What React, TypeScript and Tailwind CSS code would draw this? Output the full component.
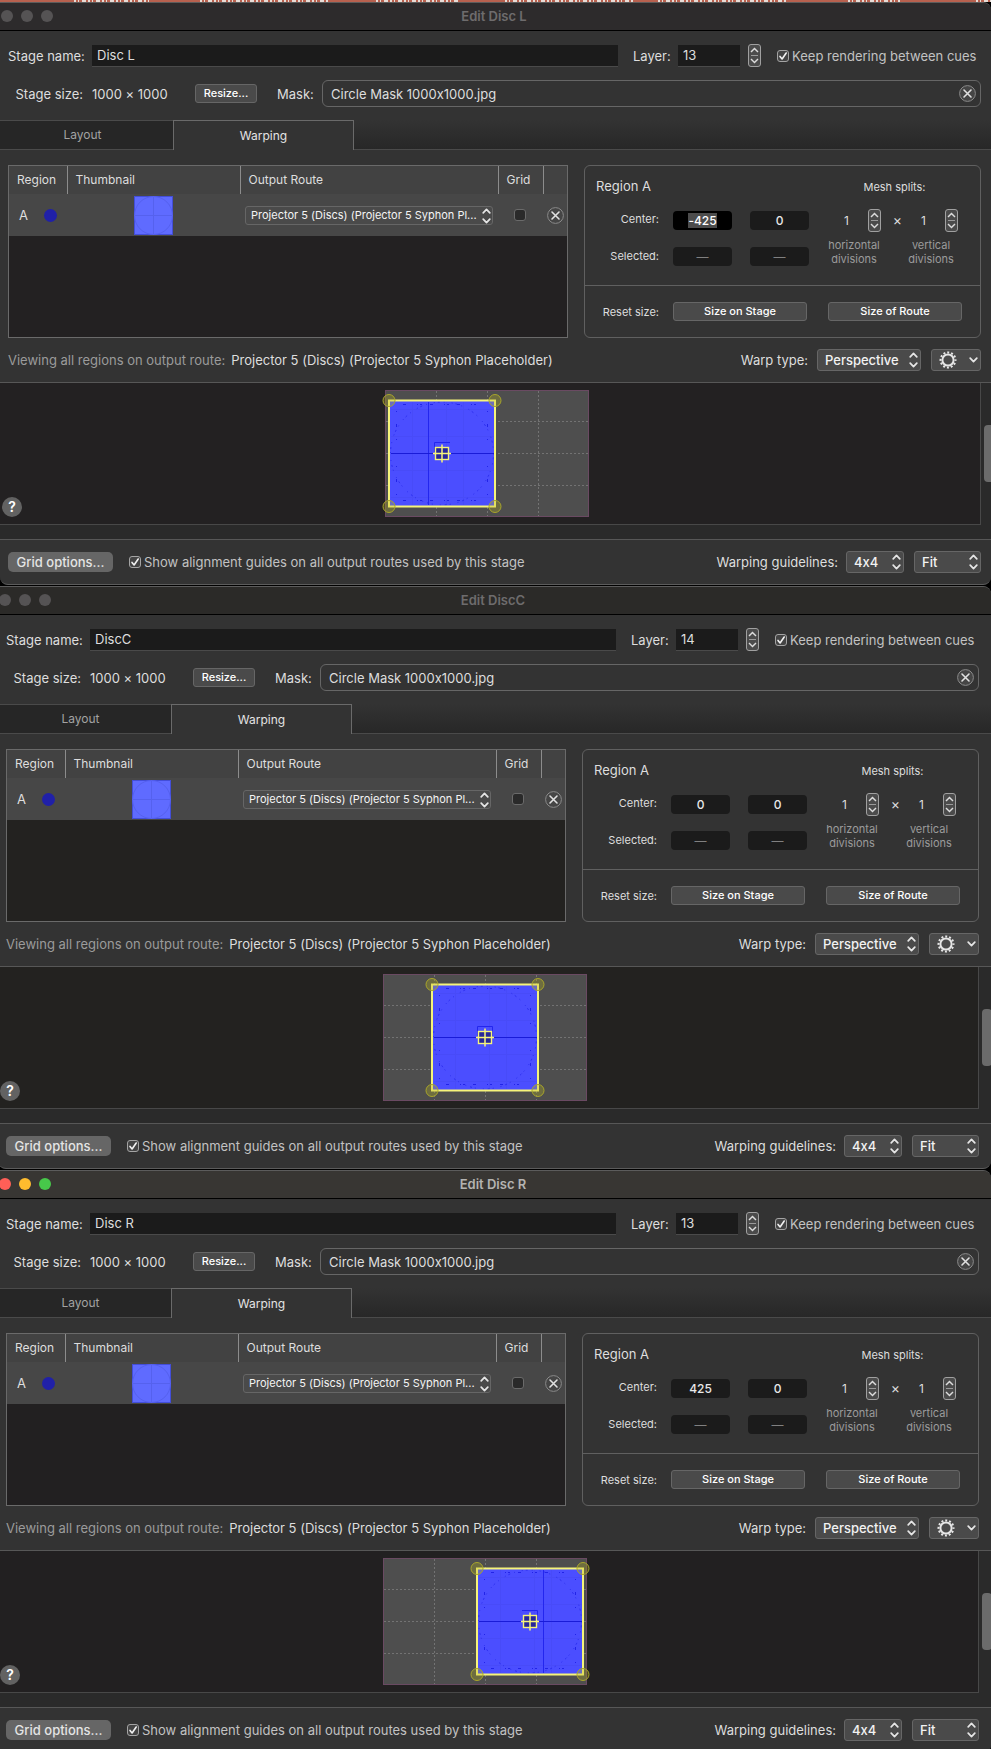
import { useState } from 'react';

type StageWindow = {
    name: string;
    title: string;
    layer: string;
    center: string;
    regionX: number;
    originX: number;
    active?: boolean;
    shifted?: boolean;
    selected?: boolean;
    titleBg: string;
    canvasBg: string;
};

const WINDOWS: StageWindow[] = [
    { name: 'Disc L', title: 'Edit Disc L', layer: '13', center: '-425', regionX: 4, originX: 43, selected: true, titleBg: 'bg-[#2d2b2c]', canvasBg: 'bg-[#232122]' },
    { name: 'DiscC', title: 'Edit DiscC', layer: '14', center: '0', regionX: 49, originX: 102, shifted: true, titleBg: 'bg-[#2b2a28]', canvasBg: 'bg-[#232220]' },
    { name: 'Disc R', title: 'Edit Disc R', layer: '13', center: '425', regionX: 94, originX: 160, active: true, shifted: true, titleBg: 'bg-[#383633]', canvasBg: 'bg-[#222021]' },
];

// light ticks = bottoms of the glyphs in the window behind
const BEHIND = [[74, 76], [200, 130], [376, 84], [505, 128], [658, 128], [848, 52], [976, 15]];

function UpDown({ className }: { className?: string }) {
    return (
        <svg width="9" height="16" viewBox="0 0 9 16" fill="none" stroke="#e6e6e6" strokeWidth="1.7" strokeLinecap="round" strokeLinejoin="round" className={className}>
            <path d="M1.2 4.8 4.5 1.4 7.8 4.8M1.2 11.2 4.5 14.6 7.8 11.2" />
        </svg>
    );
}

function Stepper({ label }: { label: string }) {
    return (
        <div className="flex h-[23px] w-[13px] flex-col items-center rounded-[3px] border border-[#a0a0a0] bg-[#4b4b4b]">
            <button aria-label={`Increase ${label}`} className="flex h-[10px] items-center">
                <svg width="9" height="6" viewBox="0 0 9 6" fill="none" stroke="#dcdcdc" strokeWidth="1.4"><path d="M1 5 4.5 1.4 8 5" /></svg>
            </button>
            <div className="h-px w-[7px] bg-[#9a9a9a]"></div>
            <button aria-label={`Decrease ${label}`} className="flex h-[10px] items-center">
                <svg width="9" height="6" viewBox="0 0 9 6" fill="none" stroke="#dcdcdc" strokeWidth="1.4"><path d="M1 1 4.5 4.6 8 1" /></svg>
            </button>
        </div>
    );
}

function Check({ id, defaultChecked, label }: { id: string, defaultChecked?: boolean, label?: string }) {
    return (
        <span className="relative block h-3 w-3">
            <input id={id} type="checkbox" defaultChecked={defaultChecked} aria-label={label} className="peer block h-3 w-3 appearance-none rounded-[3px] border border-[#6a6a6a] bg-[#2a2a2a] checked:border-[#a4a4a4] checked:bg-[#444]" />
            <svg width="12" height="12" viewBox="0 0 12 12" fill="none" stroke="#f0f0f0" strokeWidth="1.6" strokeLinecap="round" strokeLinejoin="round" className="pointer-events-none absolute inset-0 hidden peer-checked:block">
                <path d="M3 6.4 5.1 9 9.2 3" />
            </svg>
        </span>
    );
}

function ClearButton({ label }: { label: string }) {
    return (
        <button aria-label={label} className="block h-[17px] w-[17px] shrink-0">
            <svg width="17" height="17" viewBox="0 0 17 17" fill="none">
                <circle cx="8.5" cy="8.5" r="7.9" fill="#454545" stroke="#8a8a8a" />
                <path d="M5 5 12 12M12 5 5 12" stroke="#e0e0e0" strokeWidth="1.6" strokeLinecap="round" />
            </svg>
        </button>
    );
}

function Select({ id, value, label, className, small }: { id?: string, value: string, label?: string, className: string, small?: boolean }) {
    return (
        <div className={`relative ${className}`}>
            <select id={id} aria-label={label} className={small
                ? 'block h-[19px] w-full appearance-none rounded-[3px] border border-[#666] bg-[#4a4a4a] pr-3 pl-[5px] text-[11px] leading-[17px] text-[#f4f4f4]'
                : 'block h-[22px] w-full appearance-none rounded-[3px] border border-[#666] bg-[#4a4a4a] pr-5 pl-[7px] text-[13px] leading-5 font-medium text-[#f2f2f2]'}>
                <option>{value}</option>
            </select>
            <UpDown className={small ? 'pointer-events-none absolute top-[2px] right-[2px]' : 'pointer-events-none absolute top-[3px] right-[3px]'} />
        </div>
    );
}

function Thumbnail() {
    return (
        <svg width="39" height="39" viewBox="0 0 39 39" className="mx-auto block">
            <rect width="39" height="39" fill="#5f6bff" />
            <path d="M0 .5H39M0 38.5H39M.5 0V39M38.5 0V39" stroke="#434ed8" />
            <circle cx="19.5" cy="19.5" r="19" fill="none" stroke="#5561ee" />
            <path d="M19.5 0V39M0 19.5H39" stroke="#5561ee" />
        </svg>
    );
}

function StageCanvas({ x, originX }: { x: number, originX: number }) {
    const cx = x + 53;
    return (
        <svg width="216" height="127" viewBox="-6 0 216 127" fill="none" className="block">
            <rect width="204" height="127" fill="#4e4e4e" />
            <rect x=".5" y=".5" width="203" height="126" stroke="#6a4a62" />
            <path d="M51.5 1V126M102.5 1V126M153.5 1V126" stroke="#737373" strokeDasharray="2 2" />
            <path d="M1 31.5H203M1 63.5H203M1 95.5H203" stroke="#737373" strokeDasharray="2 2" />
            <rect x={x} y="10" width="107" height="107" fill="#4b4eff" />
            <path d={`M${x + 23.5} 12V115M${x + 57.5} 12V115M${x + 74.5} 12V115M${x + 2} 19.5H${x + 105}M${x + 2} 46.5H${x + 105}M${x + 2} 80.5H${x + 105}M${x + 2} 107.5H${x + 105}`} stroke="#484bf8" />
            <circle cx={cx} cy="63.5" r="51.5" stroke="#2a2cf0" strokeDasharray="1 3 2 4 1 7" />
            <path d={`M${x + 14} 14.5H${x + 94}M${x + 14} 110.5H${x + 94}`} stroke="#2224e8" strokeDasharray="3 11 1 2 2 8" />
            <path d={`M${x + 7.5} 21V50M${x + 7.5} 76V108M${x + 98.5} 21V50M${x + 98.5} 76V108`} stroke="#2224e8" strokeDasharray="1 12 3 12" />
            {originX !== 102 && <path d={`M${originX + 0.5} 12V115`} stroke="#2326ee" />}
            <path d={`M${x + 2} 63.5H${x + 105}`} stroke="#191bd8" />
            <path d={originX < 102 ? `M${cx - 7.5} 62V52.5H${cx + 8}` : originX > 102 ? `M${cx - 8} 52.5H${cx + 7.5}V62` : `M${cx - 7.5} 62V52.5H${cx + 7.5}V62`} stroke="#2326ee" />
            <rect x={x} y="10.5" width="106" height="106" stroke="#f6f47a" strokeWidth="2" />
            <rect x={cx - 6.5} y="57.5" width="13" height="12" fill="#26269a" stroke="#f6f47a" strokeWidth="1.4" />
            <path d={`M${cx} 54.5V72.5M${cx - 9} 63.5H${cx + 9}`} stroke="#f6f47a" strokeWidth="1.5" />
            {[[x, 10.5], [x + 106, 10.5], [x, 116.5], [x + 106, 116.5]].map(([px, py]) => (
                <circle key={`${px}-${py}`} cx={px} cy={py} r="6" fill="#b9b51e" fillOpacity=".3" stroke="#a9a62a" />
            ))}
        </svg>
    );
}

function Gear() {
    return (
        <svg width="18" height="18" viewBox="0 0 18 18" fill="none" stroke="#e6e6e6">
            <circle cx="9" cy="9" r="5.6" strokeWidth="2" />
            <circle cx="9" cy="9" r="7.5" strokeWidth="2" strokeDasharray="2 1.927" strokeDashoffset="1" />
        </svg>
    );
}

function EditStage({ win }: { win: StageWindow }) {
    const [tab, setTab] = useState('Warping');
    const id = win.name.replace(' ', '');
    const edge = win.shifted ? 'pl-2 pr-3' : 'pl-2 pr-2.5';
    const lights = win.active ? ['bg-[#ff5f57]', 'bg-[#febc2e]', 'bg-[#47c84a]'] : ['bg-[#555354]', 'bg-[#555354]', 'bg-[#555354]'];
    const field = 'block h-[19px] w-[59px] rounded-[4px] text-center text-[12px] font-medium outline-none focus:bg-black selection:bg-[#4c4c4c] selection:text-white';

    return (
        <section className={`border-b border-black ${win.shifted ? '-ml-0.5' : ''}`}>
            <div className="overflow-hidden rounded-tr-lg rounded-b-lg border-y border-[#5c5c5c] bg-[#333]">
                <header className={`grid h-7 grid-cols-[1fr_auto_1fr] items-center border-b border-black pr-[3px] pb-0.5 ${win.titleBg}`}>
                    <div className="flex gap-2 pl-px">
                        {lights.map((c, i) => <span key={i} className={`h-3 w-3 rounded-full ${c}`}></span>)}
                    </div>
                    <h2 className={`text-[13px] leading-4 font-semibold ${win.active ? 'text-[#b4b3b1]' : 'text-[#6e6c6d]'}`}>{win.title}</h2>
                </header>

                <div className={`flex items-center pt-[13px] ${edge}`}>
                    <label htmlFor={`${id}-name`} className="w-[75px] text-right whitespace-nowrap">Stage name:</label>
                    <input id={`${id}-name`} defaultValue={win.name} className="ml-[9px] h-[22px] min-w-0 flex-1 border-b border-[#4a4a4a] bg-[#1b1b1b] px-[5px]" />
                    <label htmlFor={`${id}-layer`} className="ml-[15px] w-9 whitespace-nowrap">Layer:</label>
                    <input id={`${id}-layer`} defaultValue={win.layer} className="ml-[9px] h-[22px] w-[62px] border-b border-[#4a4a4a] bg-[#1b1b1b] px-[5px]" />
                    <div className="ml-2"><Stepper label="layer" /></div>
                    <div className="ml-4 flex w-[204px] items-center gap-[3px]">
                        <Check id={`${id}-keep`} defaultChecked />
                        <label htmlFor={`${id}-keep`} className="whitespace-nowrap text-[#c2c2c2]">Keep rendering between cues</label>
                    </div>
                </div>

                <div className={`flex items-center pt-[13px] ${edge}`}>
                    <span className="w-[75px] text-right whitespace-nowrap">Stage size:</span>
                    <span className="ml-[9px] w-[103px] whitespace-nowrap">1000 × 1000</span>
                    <button className="h-[19px] w-[62px] rounded-[3px] border border-[#666] bg-[#4a4a4a] text-[11px] leading-[17px] font-medium text-white">Resize...</button>
                    <label htmlFor={`${id}-mask`} className="ml-5 w-[36px] whitespace-nowrap">Mask:</label>
                    <div className="ml-[9px] flex h-[27px] flex-1 items-center rounded-md border border-[#666] pr-1 pl-2">
                        <input id={`${id}-mask`} defaultValue="Circle Mask 1000x1000.jpg" className="min-w-0 flex-1" />
                        <ClearButton label="Clear mask" />
                    </div>
                </div>

                <div role="tablist" className="mt-[13px] flex h-[30px] bg-linear-to-b from-[#333] to-[#272727] text-[12px]">
                    {['Layout', 'Warping'].map((t) => (
                        <button key={t} role="tab" aria-selected={tab === t} onClick={() => setTab(t)} className={tab === t
                            ? 'w-[181px] border border-b-0 border-[#6a6a6a] bg-[#333] text-[#e4e4e4]'
                            : 'w-[173px] border-y border-[#4a4a4a] bg-[#262626] pr-2 text-[#a2a2a2]'}>{t}</button>
                    ))}
                    <div className="flex-1 border-b border-[#4a4a4a]"></div>
                </div>

                <div className={`grid grid-cols-[560fr_397fr] gap-4 pt-[15px] ${edge}`}>
                    <div className={`h-[173px] border border-[#6a6a6a] ${win.canvasBg}`}>
                        <table className="w-full table-fixed border-collapse text-left text-[12px]">
                            <thead className="bg-[#424242]">
                                <tr className="h-7">
                                    <th className="w-[58px] border-r border-[#8c8c8c] pl-2 font-normal">Region</th>
                                    <th className="w-[173px] border-r border-[#8c8c8c] pl-2 font-normal">Thumbnail</th>
                                    <th className="border-r border-[#8c8c8c] pl-2 font-normal">Output Route</th>
                                    <th className="w-[45px] border-r border-[#8c8c8c] pl-2 font-normal">Grid</th>
                                    <th className="w-6" aria-label="Remove"></th>
                                </tr>
                            </thead>
                            <tbody className="bg-[#474747]">
                                <tr className="h-[42px]">
                                    <td>
                                        <div className="flex items-center justify-between pr-2.5 pl-2.5 text-[13px]">A<span className="h-[13px] w-[13px] rounded-full bg-[#2020a8]"></span></div>
                                    </td>
                                    <td><Thumbnail /></td>
                                    <td className="px-[5px]"><Select value="Projector 5 (Discs) (Projector 5 Syphon Pl..." label="Output route" className="w-full" small /></td>
                                    <td className="pl-4"><Check id={`${id}-grid`} label="Grid" /></td>
                                    <td className="pl-1"><ClearButton label="Remove region" /></td>
                                </tr>
                            </tbody>
                        </table>
                    </div>

                    <div className="flex h-[173px] flex-col rounded-md border border-[#606060] text-[11px]">
                        <div className="grid flex-1 grid-cols-[74px_77px_77px_1fr] content-start border-b border-[#606060] pt-2">
                            <h3 className="col-span-3 pl-[11px] text-[13px] leading-6">Region A</h3>
                            <span className="pt-1 pr-1 text-center leading-[18px]">Mesh splits:</span>
                            <label htmlFor={`${id}-cx`} className="pt-[13px] text-right leading-[17px]">Center:</label>
                            <div className="pt-[13px] pl-[14px]">
                                <input id={`${id}-cx`} defaultValue={win.center} autoFocus={win.selected} onFocus={(e) => e.target.select()} className={`${field} bg-[#1b1b1b] text-[#e8e8e8]`} />
                            </div>
                            <div className="pt-[13px] pl-[14px]">
                                <input aria-label="Center y" defaultValue="0" className={`${field} bg-[#1b1b1b] text-[#e8e8e8]`} />
                            </div>
                            <div className="row-span-2 flex pt-[11px] pl-[14px] text-center">
                                <div className="flex w-[54px] flex-col">
                                    <div className="flex items-center justify-end gap-[19px] text-[12px]"><span>1</span><Stepper label="horizontal divisions" /></div>
                                    <p className="pt-1.5 leading-[14px] text-[#9b9b9b]">horizontal divisions</p>
                                </div>
                                <span className="w-[23px] pl-2.5 text-[14px] leading-[21px]">×</span>
                                <div className="flex w-[54px] flex-col">
                                    <div className="flex items-center justify-end gap-[19px] text-[12px]"><span>1</span><Stepper label="vertical divisions" /></div>
                                    <p className="pt-1.5 leading-[14px] text-[#9b9b9b]">vertical divisions</p>
                                </div>
                            </div>
                            <label htmlFor={`${id}-sx`} className="pt-[17px] text-right leading-[19px]">Selected:</label>
                            <div className="pt-[17px] pl-[14px]"><input id={`${id}-sx`} defaultValue="—" className={`${field} bg-[#1b1b1b] text-[#808080]`} /></div>
                            <div className="pt-[17px] pl-[14px]"><input aria-label="Selected y" defaultValue="—" className={`${field} bg-[#1b1b1b] text-[#808080]`} /></div>
                        </div>
                        <div className="flex h-[51px] items-center pr-[18px]">
                            <span className="w-[74px] text-right">Reset size:</span>
                            <button className="ml-[14px] h-[19px] flex-1 rounded-[3px] border border-[#666] bg-[#4a4a4a] leading-[17px] font-medium text-white">Size on Stage</button>
                            <button className="ml-[21px] h-[19px] flex-1 rounded-[3px] border border-[#666] bg-[#4a4a4a] leading-[17px] font-medium text-white">Size of Route</button>
                        </div>
                    </div>
                </div>

                <div className={`flex h-11 items-center ${edge}`}>
                    <span className="whitespace-nowrap text-[#9b9b9b]">Viewing all regions on output route:</span>
                    <span className="ml-1.5 flex-1 whitespace-nowrap">Projector 5 (Discs) (Projector 5 Syphon Placeholder)</span>
                    <label htmlFor={`${id}-warp`} className="whitespace-nowrap">Warp type:</label>
                    <Select id={`${id}-warp`} value="Perspective" className="ml-[9px] w-[104px]" />
                    <button aria-label="Warp settings" className="ml-2.5 flex h-[22px] w-[50px] items-center justify-between rounded-[3px] border border-[#666] bg-[#4a4a4a] pr-[2px] pl-[7px]">
                        <Gear />
                        <svg width="9" height="6" viewBox="0 0 9 6" fill="none" stroke="#e6e6e6" strokeWidth="1.7" strokeLinecap="round" strokeLinejoin="round"><path d="M1.2 1.2 4.5 4.6 7.8 1.2" /></svg>
                    </button>
                </div>

                <div className={`flex h-[158px] border-y border-[#575757] bg-[#2a2a2a] ${win.shifted ? 'pr-0.5' : ''}`}>
                    <div className={`relative flex h-[142px] flex-1 justify-center border-r border-b border-[#484848] pt-[7px] pr-1.5 ${win.canvasBg}`}>
                        <StageCanvas x={win.regionX} originX={win.originX} />
                        <button aria-label="Help" className="absolute bottom-[7px] left-0.5 h-5 w-5 rounded-full bg-[#626262] text-[14px] leading-5 font-semibold text-white">?</button>
                    </div>
                    <div className="w-2.5 pt-[42px] pl-[3px]">
                        <div className="h-[57px] w-2.5 rounded-[4px] bg-[#6b6b6b]"></div>
                    </div>
                </div>

                <div className={`flex h-11 items-center ${edge}`}>
                    <button className="h-5 w-[105px] rounded-[5px] bg-[#666] text-[13px] leading-5 font-medium text-[#e4e4e4]">Grid options...</button>
                    <div className="ml-4 flex flex-1 items-center gap-[3px]">
                        <Check id={`${id}-guides`} defaultChecked />
                        <label htmlFor={`${id}-guides`} className="whitespace-nowrap text-[#c2c2c2]">Show alignment guides on all output routes used by this stage</label>
                    </div>
                    <label htmlFor={`${id}-lines`} className="whitespace-nowrap">Warping guidelines:</label>
                    <Select id={`${id}-lines`} value="4x4" className="ml-2 w-[58px]" />
                    <Select value="Fit" label="Zoom" className="ml-2.5 w-[67px]" />
                </div>
            </div>
        </section>
    );
}

export default function App() {
    return (
        <main className="overflow-hidden bg-black font-['Inter',sans-serif] text-[13px] leading-4 text-[#dedede] [font-feature-settings:'calt'_0]">
            <svg width="100%" height="2" className="block">
                <rect width="100%" height="2" fill="#b8614f" />
                {BEHIND.map(([x, w]) => <path key={x} d={`M${x} 1H${x + w}`} stroke="#e8dcd6" strokeWidth="2" strokeDasharray="2 2 1 3 4 2" />)}
            </svg>
            {WINDOWS.map((w) => <EditStage key={w.name} win={w} />)}
        </main>
    );
}
